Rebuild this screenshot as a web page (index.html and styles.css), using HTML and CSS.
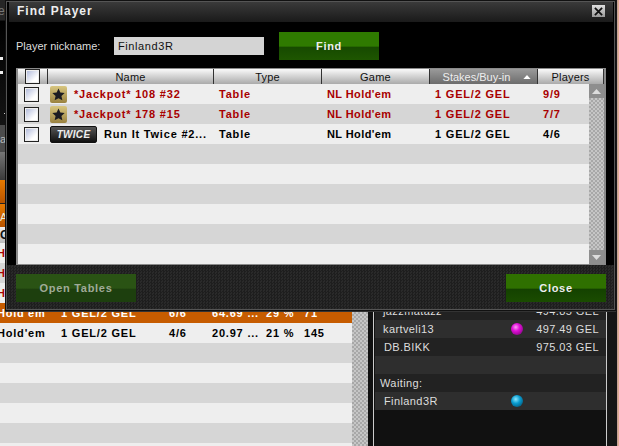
FILE: index.html
```html
<!DOCTYPE html>
<html lang="en">
<head>
    <meta charset="UTF-8">
    <title>Find Player</title>
    <link rel="stylesheet" href="styles.css">
</head>
<body>

<div class="lobby">
    <div class="lobby-left">
        <div class="games">
            <div class="strip strip-top"><span class="strip-e">e</span></div>
            <div class="strip strip-filter"><span>a</span></div>
            <div class="strip strip-tool"></div>
            <div class="strip strip-orange"></div>
            <div class="strip strip-orange2"><span>A</span></div>
            <div class="strip strip-head"><span>G</span></div>
            <div class="game-row light red"><span class="g-name">Hold'em</span></div>
            <div class="game-row dark red"><span class="g-name">Hold'em</span></div>
            <div class="game-row light red"><span class="g-name">Hold'em</span></div>
            <div class="game-row active">
                <span class="g-name">Hold'em</span><span class="g-stake">1 GEL/2 GEL</span><span class="g-seats">6/6</span>
                <span class="g-pot">64.69 ...</span><span class="g-pct">29 %</span><span class="g-hands">71</span>
            </div>
            <div class="game-row light">
                <span class="g-name">Hold'em</span><span class="g-stake">1 GEL/2 GEL</span><span class="g-seats">4/6</span>
                <span class="g-pot">20.97 ...</span><span class="g-pct">21 %</span><span class="g-hands">145</span>
            </div>
            <div class="game-row dark"></div>
            <div class="game-row light"></div>
            <div class="game-row dark"></div>
            <div class="game-row light"></div>
            <div class="game-row dark"></div>
            <div class="game-row light"></div>
        </div>
        <div class="games-scroll"></div>
    </div>

    <div class="seats">
        <div class="seat-row seat-alt"><span class="seat-name">jazzmatazz</span><span class="seat-money">494.85 GEL</span></div>
        <div class="seat-row"><span class="seat-name">kartveli13</span><i class="ball ball-pink"></i><span class="seat-money">497.49 GEL</span></div>
        <div class="seat-row seat-alt"><span class="seat-name seat-db">DB.BIKK</span><span class="seat-money">975.03 GEL</span></div>
        <div class="seat-row"></div>
        <div class="seat-row seat-alt seat-title">Waiting:</div>
        <div class="seat-row"><span class="seat-name seat-db">Finland3R</span><i class="ball ball-blue"></i></div>
    </div>
    <div class="lobby-edge"></div>
</div>

<div class="dialog">
    <div class="title-bar">
        <span class="title">Find Player</span>
        <button class="close-x">
            <svg width="9" height="9" viewBox="0 0 10 10"><path d="M1 1l8 8M9 1l-8 8" stroke="#111" stroke-width="2"/></svg>
        </button>
    </div>

    <div class="search">
        <label class="search-label">Player nickname:</label>
        <input class="search-input" type="text" value="Finland3R">
        <button class="btn btn-find">Find</button>
    </div>

    <div class="list">
        <div class="list-head">
            <div class="th th-check"><span class="check"></span></div>
            <div class="th">Name</div>
            <div class="th">Type</div>
            <div class="th">Game</div>
            <div class="th th-sorted">Stakes/Buy-in
                <svg class="sort" width="8" height="4" viewBox="0 0 9 5"><path d="M4.500 0L9 5H0z" fill="#fff"/></svg>
            </div>
            <div class="th">Players</div>
        </div>
        <div class="list-body">
            <div class="rows">
                <div class="row row-light row-red">
                    <div class="cell-check"><span class="check"></span></div>
                    <div class="cell-name">
                        <span class="star-icon"><svg width="13" height="13" viewBox="0 0 24 24"><path d="M12 1l3.400 7.400 8 .9-6 5.400 1.700 8L12 18.700l-7.100 4 1.700-8-6-5.400 8-.9z" fill="#1c1c22"/></svg></span>
                        <span class="table-name">*Jackpot* 108 #32</span>
                    </div>
                    <div class="cell">Table</div>
                    <div class="cell cell-game">NL Hold'em</div>
                    <div class="cell">1 GEL/2 GEL</div>
                    <div class="cell">9/9</div>
                </div>
                <div class="row row-dark row-red">
                    <div class="cell-check"><span class="check"></span></div>
                    <div class="cell-name">
                        <span class="star-icon"><svg width="13" height="13" viewBox="0 0 24 24"><path d="M12 1l3.400 7.400 8 .9-6 5.400 1.700 8L12 18.700l-7.100 4 1.700-8-6-5.400 8-.9z" fill="#1c1c22"/></svg></span>
                        <span class="table-name">*Jackpot* 178 #15</span>
                    </div>
                    <div class="cell">Table</div>
                    <div class="cell cell-game">NL Hold'em</div>
                    <div class="cell">1 GEL/2 GEL</div>
                    <div class="cell">7/7</div>
                </div>
                <div class="row row-light">
                    <div class="cell-check"><span class="check"></span></div>
                    <div class="cell-name">
                        <span class="twice-icon">TWICE</span>
                        <span class="table-name table-name-twice">Run It Twice #2...</span>
                    </div>
                    <div class="cell">Table</div>
                    <div class="cell cell-game">NL Hold'em</div>
                    <div class="cell">1 GEL/2 GEL</div>
                    <div class="cell">4/6</div>
                </div>
                <div class="row row-dark"></div>
                <div class="row row-light"></div>
                <div class="row row-dark"></div>
                <div class="row row-light"></div>
                <div class="row row-dark"></div>
                <div class="row row-light"></div>
            </div>
            <div class="scrollbar">
                <div class="scroll-btn"><svg width="9" height="5" viewBox="0 0 9 5"><path d="M4.500 0L9 5H0z" fill="#ddd"/></svg></div>
                <div class="scroll-btn"><svg width="9" height="5" viewBox="0 0 9 5"><path d="M0 0h9L4.500 5z" fill="#ddd"/></svg></div>
            </div>
        </div>
    </div>

    <div class="footer">
        <button class="btn btn-open">Open Tables</button>
        <button class="btn btn-close">Close</button>
    </div>
</div>

</body>
</html>
```

FILE: styles.css
```css
* {
    margin: 0;
    padding: 0;
    box-sizing: border-box;
}
body {
    width: 619px;
    height: 446px;
    background: #111;
    font-family: "Liberation Sans", Arial, sans-serif;
    font-size: 11px;
    position: relative;
    overflow: hidden;
}

/* lobby behind the dialog */
.lobby {
    display: flex;
    height: 446px;
}
.lobby-left {
    display: flex;
    width: 368px;
    flex-shrink: 0;
}
.games {
    width: 352px;
    overflow: hidden;
}
.games-scroll {
    width: 16px;
    background: repeating-conic-gradient(#a8a8a8 0 25%, #c6c6c6 0 50%) 0 0 / 4px 4px;
}
.strip {
    color: #ddd;
    line-height: 16px;
    overflow: hidden;
}
.strip-top {
    height: 125px;
    background:
        linear-gradient(#eee, #eee) 0 57px / 3px 3px no-repeat,
        linear-gradient(#eee, #eee) 0 71px / 3px 3px no-repeat,
        linear-gradient(#ccc, #ccc) 4px 113px / 1px 1px no-repeat,
        linear-gradient(#262626 0, #262626 20px, #000 21px, #141414 125px);
}
.strip-e {
    display: block;
    margin-left: -2px;
    padding-top: 3px;
    font-size: 12px;
    color: #777;
}
.strip-filter {
    height: 27px;
    padding-top: 6px;
    background: #4c4c4c;
    color: #bbb;
}
.strip-tool {
    height: 28px;
    background: linear-gradient(#777, #3a3a3a);
}
.strip-orange {
    height: 24px;
    background: linear-gradient(#e67a00, #b85400);
    border-bottom: 1px solid #222;
}
.strip-orange2 {
    height: 23px;
    padding-top: 5px;
    background: linear-gradient(#e67a00, #b85400);
    color: #eed;
}
.strip-head {
    height: 16px;
    background: linear-gradient(#f2f2f2, #bbb);
    color: #111;
    font-weight: bold;
    font-size: 12px;
}
.game-row {
    display: flex;
    height: 20px;
    align-items: center;
    font-weight: bold;
    letter-spacing: 0.8px;
    color: #000;
    white-space: nowrap;
}
.game-row.light { background: #eee; }
.game-row.dark { background: #d6d6d6; }
.game-row.red { color: #a80000; }
.game-row.active {
    background: #c65c00;
    color: #fff;
}
.g-name {
    width: 64px;
    margin-left: -3px;
}
.g-stake { width: 108px; }
.g-seats { width: 43px; }
.g-pot { width: 54px; }
.g-pct { width: 38px; }

.seats {
    width: 234px;
    margin-left: 5px;
    padding: 302px 0 0 1px;
    border-left: 1px solid #ccc;
    border-right: 1px solid #ccc;
    background: linear-gradient(#1a1a1a, #111 90%);
    color: #ddd;
    flex-shrink: 0;
}
.seat-row {
    display: flex;
    align-items: center;
    height: 18px;
    padding-right: 7px;
    background: #2e2e2e;
    letter-spacing: 0.4px;
    white-space: nowrap;
}
.seat-row.seat-alt { background: #222; }
.seat-name {
    width: 136px;
    padding-left: 8px;
}
.seat-db { padding-left: 9px; }
.seat-title { padding-left: 5px; }
.seat-money {
    margin-left: auto;
}
.ball {
    display: block;
    width: 12px;
    height: 12px;
    border-radius: 50%;
}
.ball-pink { background: radial-gradient(circle at 40% 35%, #ff9cf5 0, #e010d8 35%, #6a0068 100%); }
.ball-blue { background: radial-gradient(circle at 40% 35%, #8ce8ff 0, #089cd0 40%, #03405c 100%); }
.lobby-edge {
    flex: 1;
    background: linear-gradient(to right, #161616 0, #161616 10px, #b99 10px, #eab68f 100%);
}

/* dialog */
.dialog {
    position: absolute;
    left: 5px;
    top: 0;
    width: 611px;
    height: 311px;
    display: flex;
    flex-direction: column;
    background: #000;
    border: 1px solid #111;
    outline: 1px solid #555;
    outline-offset: -2px;
    box-shadow: 0 1px 0 #333;
    padding: 1px 2px 2px;
}
.title-bar {
    display: flex;
    align-items: center;
    justify-content: space-between;
    height: 20px;
    margin-left: 1px;
    padding: 0 8px 2px 8px;
    background: linear-gradient(#3a3a3a, #1a1a1a);
    flex-shrink: 0;
}
.title {
    color: #eee;
    font-size: 12px;
    font-weight: bold;
    letter-spacing: 1px;
}
.close-x {
    display: flex;
    align-items: center;
    justify-content: center;
    width: 13px;
    height: 12px;
    border: none;
    background: linear-gradient(#e0e0e0, #999);
}
.search {
    display: flex;
    align-items: center;
    height: 47px;
    margin-top: -1px;
    padding: 3px 0 0 8px;
    flex-shrink: 0;
}
.search-label {
    width: 98px;
    color: #ddd;
}
.search-input {
    width: 150px;
    height: 18px;
    padding-left: 4px;
    border: none;
    background: #d4d4d4;
    color: #111;
    font-family: "Liberation Sans", Arial, sans-serif;
    font-size: 11px;
    letter-spacing: 0.6px;
}
.btn {
    border: none;
    font-family: "Liberation Sans", Arial, sans-serif;
    font-size: 11px;
    font-weight: bold;
    letter-spacing: 0.7px;
    color: #eee;
    height: 28px;
}
.btn-find {
    width: 100px;
    margin-left: 15px;
    background: linear-gradient(#2f7a00, #2f7a00 50%, #174a00 55%, #1e5600);
}
.btn-close {
    width: 100px;
    background: linear-gradient(#2f7000, #2f7000 50%, #144200 55%, #1a4c00);
}
.btn-open {
    width: 120px;
    color: #a0ab98;
    background: linear-gradient(#2a5314, #2a5314 50%, #1d3f0e 55%, #1d3f0e);
}

.list {
    margin-left: 8px;
    width: 590px;
    height: 197px;
    flex-shrink: 0;
    border: 2px solid #8a8a8a;
    border-top-width: 1px;
    background: #8a8a8a;
    display: flex;
    flex-direction: column;
}
.list-head {
    display: grid;
    grid-template-columns: 30px 166px 108px 108px 108px 66px;
    height: 15px;
    flex-shrink: 0;
}
.th {
    display: flex;
    align-items: center;
    justify-content: center;
    position: relative;
    background: linear-gradient(#fafafa, #aaa);
    border-right: 1px solid #333;
    color: #111;
    letter-spacing: 0.2px;
}
.th-check { justify-content: flex-start; padding-left: 7px; }
.th-sorted {
    padding-right: 14px;
    background: linear-gradient(#9a9a9a, #6c6c6c);
    color: #eee;
    letter-spacing: 0;
}
.sort {
    position: absolute;
    right: 6px;
    top: 6px;
}
.list-body {
    display: flex;
    flex: 1;
}
.rows {
    width: 571px;
}
.row {
    display: grid;
    grid-template-columns: 30px 166px 108px 108px 108px 51px;
    align-items: center;
    height: 20px;
    color: #000;
    font-weight: bold;
    letter-spacing: 0.8px;
    white-space: nowrap;
}
.row-light { background: #eee; }
.row-dark { background: #d6d6d6; }
.row-red { color: #a80000; }
.cell { padding-left: 5px; }
.cell-game { letter-spacing: 0.4px; }
.cell-check {
    padding-left: 6px;
    display: flex;
}
.check {
    display: block;
    width: 15px;
    height: 15px;
    background: linear-gradient(135deg, #aab4d8, #fff 70%);
    border: 1px solid #222;
    outline: 1px solid #eee;
    outline-offset: -2px;
}
.cell-name {
    display: flex;
    align-items: center;
    padding-left: 2px;
}
.star-icon {
    display: flex;
    align-items: center;
    justify-content: center;
    width: 17px;
    height: 17px;
    border-radius: 2px;
    background: linear-gradient(#d8c680, #9a8240);
}
.table-name { margin-left: 7px; }
.table-name-twice { margin-left: 7px; }
.twice-icon {
    width: 47px;
    height: 17px;
    line-height: 15px;
    text-align: center;
    border: 1px solid #111;
    border-radius: 2px;
    background: linear-gradient(#555, #111);
    color: #eee;
    font-size: 10px;
    font-style: italic;
    letter-spacing: 0.3px;
}
.scrollbar {
    display: flex;
    flex-direction: column;
    justify-content: space-between;
    flex: 1;
    background: repeating-conic-gradient(#a8a8a8 0 25%, #c6c6c6 0 50%) 0 0 / 4px 4px;
}
.scroll-btn {
    display: flex;
    align-items: center;
    justify-content: center;
    height: 14px;
    background: #8e8e8e;
}
.footer {
    display: flex;
    justify-content: space-between;
    align-items: center;
    flex: 1;
    margin: 0 -2px -2px;
    padding: 0 9px 0 10px;
    background: repeating-conic-gradient(#1e1e1e 0 25%, #2a2a2a 0 50%) 0 0 / 3px 3px;
}
```
